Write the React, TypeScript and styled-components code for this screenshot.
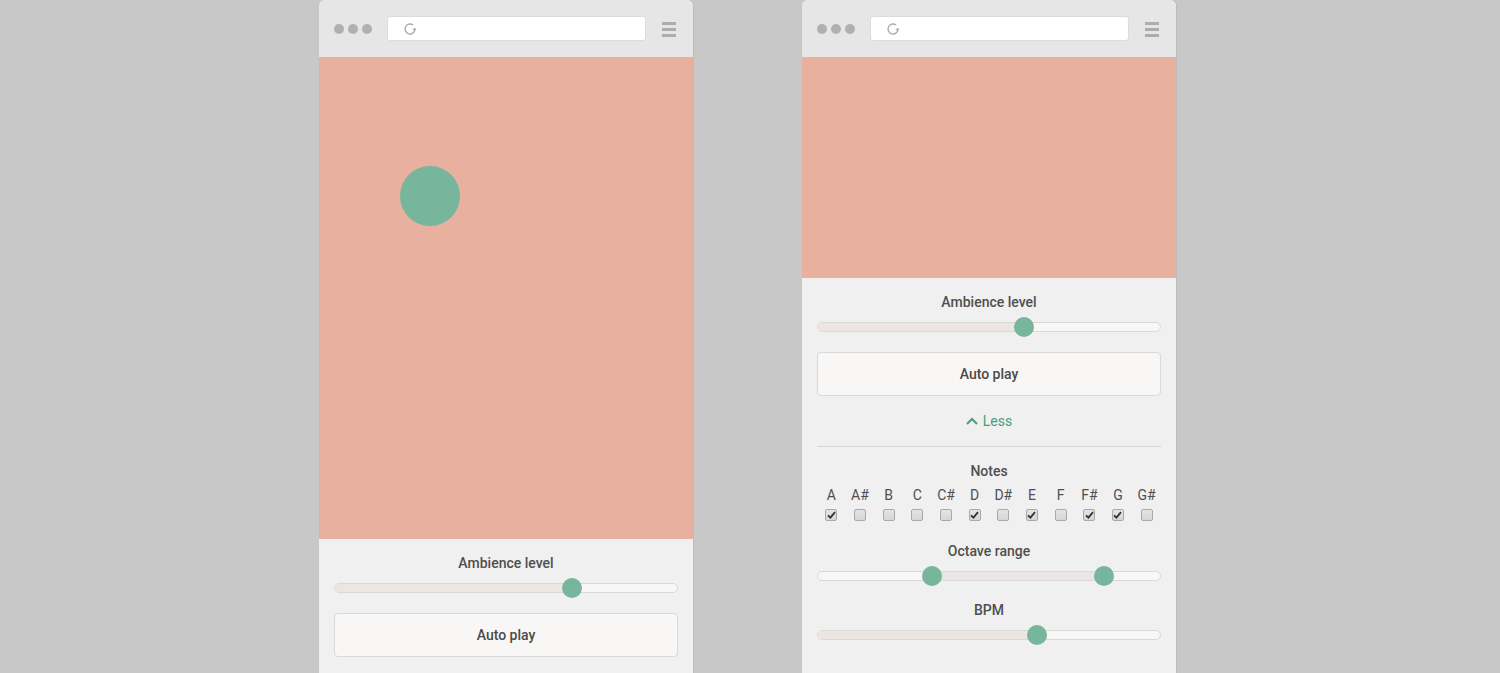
import React from 'react';
import styled, { createGlobalStyle } from 'styled-components';

const GlobalStyle = createGlobalStyle`
  html, body {
    margin: 0;
    padding: 0;
    background: #c8c8c8;
    font-family: Roboto, "Liberation Sans", Arial, sans-serif;
  }
`;

const Stage = styled.div`
  display: flex;
  align-items: flex-start;
  gap: 109px;
  padding-left: 319px;
  height: 673px;
  overflow: hidden;
`;

const Window = styled.div`
  width: 374px;
  height: 673px;
  background: #f0f0f0;
  border-radius: 6px 6px 0 0;
  overflow: hidden;
  display: flex;
  flex-direction: column;
  box-shadow: 1px 0 0 rgba(0, 0, 0, 0.06);
`;

const Chrome = styled.div`
  height: 57px;
  flex: none;
  background: #e6e6e6;
  display: flex;
  align-items: center;
  padding: 0 17px 0 15px;
  box-sizing: border-box;
`;

const Dots = styled.div`
  display: flex;
  gap: 4px;
`;

const Dot = styled.span`
  width: 10px;
  height: 10px;
  border-radius: 50%;
  background: #b0b0b0;
`;

const AddressBar = styled.div`
  width: 259px;
  height: 25px;
  margin-left: 15px;
  background: #fff;
  border: 1px solid #dcdcdc;
  border-radius: 3px;
  box-sizing: border-box;
  display: flex;
  align-items: center;
  padding-left: 15px;
`;

const Burger = styled.div`
  margin-left: auto;
  display: flex;
  flex-direction: column;
  gap: 3px;
  margin-top: 1px;
  span {
    display: block;
    width: 14px;
    height: 3px;
    background: #adadad;
  }
`;

const Canvas = styled.div<{ tall: boolean }>`
  position: relative;
  flex: none;
  height: ${p => (p.tall ? 482 : 221)}px;
  background: #e8b09e;
`;

const Ball = styled.div`
  position: absolute;
  left: 81px;
  top: 109px;
  width: 60px;
  height: 60px;
  border-radius: 50%;
  background: #77b59c;
`;

const Controls = styled.div`
  padding: 16px 15px 0;
  display: flex;
  flex-direction: column;
`;

const Label = styled.div<{ gap?: number }>`
  font-size: 14px;
  line-height: 16px;
  font-weight: 500;
  color: #4f4f4f;
  text-align: center;
  margin-top: ${p => p.gap ?? 0}px;
`;

const Track = styled.div`
  position: relative;
  height: 10px;
  margin-top: 12px;
  background: #f8f7f5;
  border: 1px solid #d9d9d9;
  border-radius: 5px;
  box-sizing: border-box;
`;

const Fill = styled.div`
  position: absolute;
  top: 0;
  bottom: 0;
  background: #ebe6e3;
  border-radius: 5px;
`;

const Thumb = styled.div`
  position: absolute;
  top: 50%;
  width: 20px;
  height: 20px;
  margin: -10px 0 0 -10px;
  border-radius: 50%;
  background: #77b59c;
`;

const Button = styled.button`
  margin-top: 20px;
  height: 44px;
  background: #f8f7f5;
  border: 1px solid #d9d9d9;
  border-radius: 4px;
  font-family: inherit;
  font-size: 14px;
  font-weight: 500;
  color: #4a4a4a;
`;

const Toggle = styled.div`
  margin-top: 16px;
  display: flex;
  justify-content: center;
  align-items: center;
  gap: 5px;
  font-size: 14px;
  line-height: 18px;
  color: #4f9a7d;
`;

const Divider = styled.hr`
  margin: 16px 0 0;
  border: none;
  border-top: 1px solid #d6d6d6;
`;

const NotesGrid = styled.div`
  display: grid;
  grid-template-columns: repeat(12, 1fr);
  margin-top: 8px;
  justify-items: center;
  row-gap: 6px;
`;

const NoteName = styled.div`
  font-size: 14px;
  line-height: 16px;
  color: #4f4f4f;
`;

const Box = styled.span`
  width: 12px;
  height: 12px;
  box-sizing: border-box;
  border: 1px solid #a9a9a9;
  border-radius: 2px;
  background: linear-gradient(#e4e4e4, #d6d6d6);
  display: flex;
  align-items: center;
  justify-content: center;
`;

const Slider: React.FC<{ from?: number; to: number; range?: boolean }> = ({ from = 0, to, range }) => (
  <Track>
    <Fill style={{ left: `${from * 100}%`, width: `${(to - from) * 100}%` }} />
    {range && <Thumb style={{ left: `${from * 100}%` }} />}
    <Thumb style={{ left: `${to * 100}%` }} />
  </Track>
);

const BrowserChrome = () => (
  <Chrome>
    <Dots>
      <Dot />
      <Dot />
      <Dot />
    </Dots>
    <AddressBar>
      <svg width="14" height="14" viewBox="0 0 14 14" fill="none">
        <path d="M12 7.5A5 5 0 1 1 10 3" stroke="#a8a8a8" strokeWidth="1.3" />
        <path d="M13 6 L11.9 9.2 L9.4 7 Z" fill="#a8a8a8" />
      </svg>
    </AddressBar>
    <Burger>
      <span />
      <span />
      <span />
    </Burger>
  </Chrome>
);

const notes: [string, boolean][] = [
  ['A', true], ['A#', false], ['B', false], ['C', false], ['C#', false], ['D', true],
  ['D#', false], ['E', true], ['F', false], ['F#', true], ['G', true], ['G#', false],
];

const Check = () => (
  <svg width="9" height="8" viewBox="0 0 9 8">
    <path d="M1 4.3 L3.4 6.6 L8 1.2" stroke="#333" strokeWidth="1.8" fill="none" />
  </svg>
);

export default function App() {
  return (
    <>
      <GlobalStyle />
      <Stage>
        <Window>
          <BrowserChrome />
          <Canvas tall>
            <Ball />
          </Canvas>
          <Controls>
            <Label>Ambience level</Label>
            <Slider to={0.692} />
            <Button>Auto play</Button>
          </Controls>
        </Window>

        <Window>
          <BrowserChrome />
          <Canvas tall={false} />
          <Controls>
            <Label>Ambience level</Label>
            <Slider to={0.602} />
            <Button>Auto play</Button>
            <Toggle>
              <svg width="12" height="8" viewBox="0 0 12 8">
                <path d="M1 7 L6 2 L11 7" stroke="#4f9a7d" strokeWidth="2" fill="none" />
              </svg>
              Less
            </Toggle>
            <Divider />
            <Label gap={16}>Notes</Label>
            <NotesGrid>
              {notes.map(([n]) => (
                <NoteName key={n}>{n}</NoteName>
              ))}
              {notes.map(([n, on]) => (
                <Box key={n + 'b'}>{on && <Check />}</Box>
              ))}
            </NotesGrid>
            <Label gap={22}>Octave range</Label>
            <Slider range from={0.334} to={0.837} />
            <Label gap={21}>BPM</Label>
            <Slider to={0.64} />
          </Controls>
        </Window>
      </Stage>
    </>
  );
}
